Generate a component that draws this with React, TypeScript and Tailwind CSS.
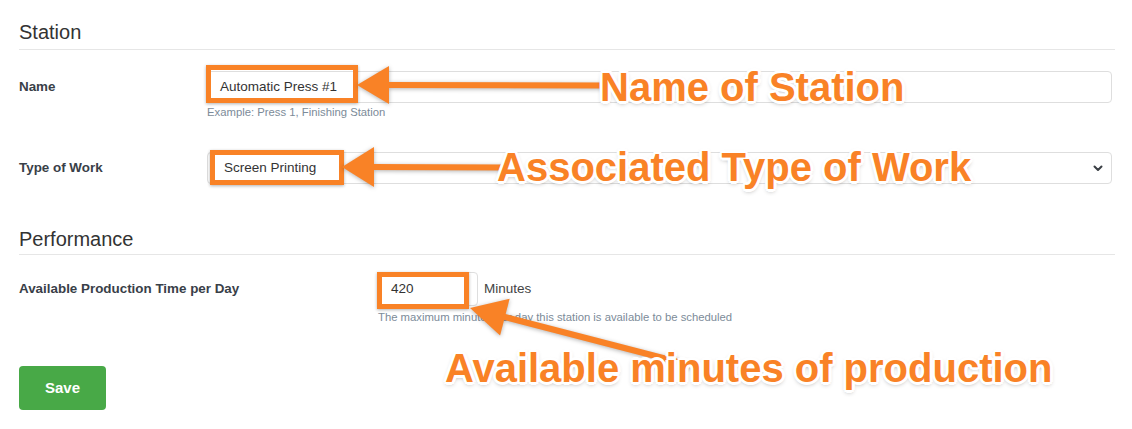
import React from 'react';

const ORANGE = '#f98226';

const OUTLINE =
  '[text-shadow:-2px_-2px_0_#fff,2px_-2px_0_#fff,-2px_2px_0_#fff,2px_2px_0_#fff,0_-3px_0_#fff,0_3px_0_#fff,-3px_0_0_#fff,3px_0_0_#fff,0_2px_5px_rgba(0,0,0,0.45)]';

function Callout({ text, className }: { text: string; className: string }) {
  return (
    <div
      className={`absolute whitespace-nowrap text-[40px] leading-[40px] font-bold text-[#f98226] ${OUTLINE} ${className}`}
    >
      {text}
    </div>
  );
}

function Arrows() {
  // arrow 3 runs from the callout text up to the minutes box
  const tip = { x: 470, y: 308 };
  const end = { x: 690, y: 365 };
  const dx = end.x - tip.x;
  const dy = end.y - tip.y;
  const len = Math.hypot(dx, dy);
  const ux = dx / len;
  const uy = dy / len;
  const bx = tip.x + 36 * ux;
  const by = tip.y + 36 * uy;
  const head = `${tip.x},${tip.y} ${bx - 19 * uy},${by + 19 * ux} ${bx + 19 * uy},${by - 19 * ux}`;

  return (
    <svg
      className="pointer-events-none absolute inset-0 drop-shadow-[0_1px_2px_rgba(0,0,0,0.3)]"
      width={1132}
      height={429}
      viewBox="0 0 1132 429"
    >
      <g fill={ORANGE} stroke="none">
        <polygon points="357,85 389,66 389,104" />
        <polygon points="386,82 612,82.5 612,88.5 386,88" />
        <polygon points="342,167 374,147 374,187" />
        <polygon points="371,164 506,164.5 506,170.5 371,170" />
        <polygon points={head} />
      </g>
      <line x1={bx - 2 * ux} y1={by - 2 * uy} x2={end.x} y2={end.y} stroke={ORANGE} strokeWidth={6} />
    </svg>
  );
}

export default function App() {
  return (
    <div className="relative h-[429px] w-[1132px] overflow-hidden bg-white font-['Liberation_Sans',Arial,sans-serif] text-[#333]">
      <div className="pl-[19px] pr-[17px] pt-[18px]">
        {/* Station */}
        <h2 className="border-b border-[#e6e6e6] pb-[3px] text-[20px] leading-[28px] font-normal text-[#333]">
          Station
        </h2>

        <div className="mt-[21px] flex">
          <label className="flex h-[32px] w-[188px] shrink-0 items-center text-[13.4px] font-bold text-[#394048]">
            Name
          </label>
          <div className="mr-[3px] flex-1">
            <div className="flex h-[32px] items-center rounded-[4px] border border-[#dedede] pl-[12px] text-[13.5px] text-[#333]">
              Automatic Press #1
            </div>
            <p className="mt-[2px] text-[11.3px] leading-[14px] text-[#7c8b99]">Example: Press 1, Finishing Station</p>
          </div>
        </div>

        <div className="mt-[33px] flex">
          <label className="flex h-[32px] w-[188px] shrink-0 items-center text-[13.4px] font-bold text-[#394048]">
            Type of Work
          </label>
          <div className="mr-[3px] flex h-[32px] flex-1 items-center justify-between rounded-[4px] border border-[#dedede] pl-[16px] pr-[8px] text-[13.5px] text-[#333]">
            <span>Screen Printing</span>
            <svg width="10" height="7" viewBox="0 0 10 7" fill="none">
              <path d="M1.5 1.5 5 5 8.5 1.5" stroke="#3a3f44" strokeWidth="2" strokeLinecap="round" strokeLinejoin="round" />
            </svg>
          </div>
        </div>

        {/* Performance */}
        <h2 className="mt-[41px] border-b border-[#e6e6e6] pb-px text-[20px] leading-[28px] font-normal text-[#333]">
          Performance
        </h2>

        <div className="mt-[17px] flex">
          <label className="flex h-[34px] w-[359px] shrink-0 items-center text-[13.4px] font-bold text-[#394048]">
            Available Production Time per Day
          </label>
          <div>
            <div className="flex h-[34px] items-center">
              <div className="flex h-full w-[100px] items-center rounded-[4px] border border-[#dedede] pl-[12px] text-[13.5px] text-[#333]">
                420
              </div>
              <span className="pl-[6px] text-[13.5px] text-[#444]">Minutes</span>
            </div>
            <p className="mt-[4px] text-[11.3px] leading-[14px] text-[#7c8b99]">
              The maximum minutes per day this station is available to be scheduled
            </p>
          </div>
        </div>

        <button className="mt-[42px] h-[44px] w-[87px] rounded-[4px] bg-[#48a947] text-[15px] font-bold text-white">
          Save
        </button>
      </div>

      {/* highlight boxes */}
      <div className="absolute left-[206px] top-[65px] h-[38px] w-[152px] border-[5px] border-[#f98226] shadow-[0_1px_3px_rgba(0,0,0,0.3)]" />
      <div className="absolute left-[210px] top-[150px] h-[35px] w-[134px] border-[5px] border-[#f98226] shadow-[0_1px_3px_rgba(0,0,0,0.3)]" />
      <div className="absolute left-[377px] top-[272px] h-[37px] w-[92px] border-[5px] border-[#f98226] shadow-[0_1px_3px_rgba(0,0,0,0.3)]" />

      <Arrows />

      <Callout text="Name of Station" className="left-[600px] top-[67px]" />
      <Callout text="Associated Type of Work" className="left-[497px] top-[147px]" />
      <Callout text="Available minutes of production" className="left-[445px] top-[348px]" />
    </div>
  );
}
